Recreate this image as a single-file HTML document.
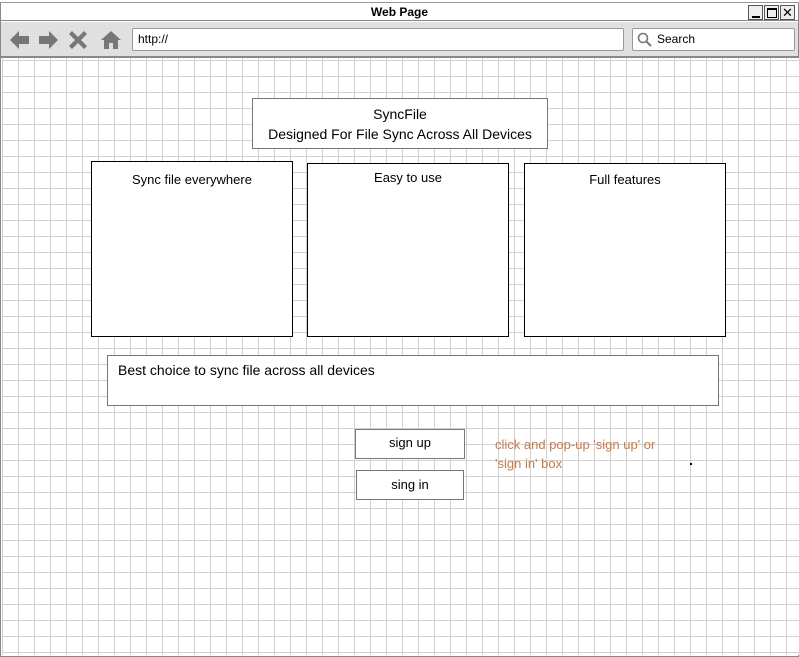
<!DOCTYPE html>
<html><head><style>
body{margin:0;width:799px;height:657px;overflow:hidden;background:#fff;font-family:"Liberation Sans",sans-serif;position:relative}
.a{position:absolute;box-sizing:border-box}
.grid{left:2px;top:58px;width:797px;height:597px;background-color:#fff;
background-image:linear-gradient(to right,#d0d0d0 1px,transparent 1px),linear-gradient(to bottom,#d0d0d0 1px,transparent 1px);
background-size:16px 16px;background-position:0px 2px}
.box{background:#fff;border:1px solid #000;text-align:center;font-size:13px;color:#000}
.btn{background:#fff;border:1px solid #777;text-align:center;font-size:13px}
</style></head><body>
<div class="a" style="left:0;top:2px;width:799px;height:655px;border:1px solid #888;border-top:2px solid #999"></div>
<div class="a" style="left:1px;top:3px;width:797px;height:18px;background:#fff;border-bottom:1px solid #888;text-align:center;font-size:12px;font-weight:bold;line-height:18px">Web Page</div>
<div class="a" style="left:748px;top:5px;width:15px;height:15px;border:1px solid #555;background:#eee"><div class="a" style="left:3px;top:10px;width:8px;height:2px;background:#000"></div></div>
<div class="a" style="left:764px;top:5px;width:15px;height:15px;border:1px solid #555;background:#eee"><div class="a" style="left:2px;top:2px;width:10px;height:10px;border:1px solid #000;border-top-width:2px"></div></div>
<div class="a" style="left:780px;top:5px;width:15px;height:15px;border:1px solid #555;background:#eee;font-size:13px;line-height:13px;text-align:center">✕</div>
<div class="a" style="left:1px;top:22px;width:797px;height:36px;background:#e0e0e0;border-bottom:2px solid #888"></div>
<svg class="a" style="left:8px;top:28px" width="120" height="24" viewBox="0 0 120 24" fill="#777">
<path d="M2 12 L11 3 L11 8 L21 8 L21 16 L11 16 L11 21 Z"/>
<path d="M50 12 L41 3 L41 8 L31 8 L31 16 L41 16 L41 21 Z"/>
<path d="M61 4 L64 1 L70 7 L76 1 L79 4 L73 10 L79 16 L76 19 L70 13 L64 19 L61 16 L67 10 Z" transform="translate(0,2)"/>
<path d="M93 12 L103 3 L113 12 L110 12 L110 21 L105 21 L105 15 L101 15 L101 21 L96 21 L96 12 Z"/>
</svg>
<div class="a" style="left:132px;top:28px;width:492px;height:23px;background:#fff;border:1px solid #999;border-radius:2px;font-size:12px;line-height:21px;padding-left:5px">http://</div>
<div class="a" style="left:632px;top:28px;width:163px;height:23px;background:#fff;border:1px solid #999;border-radius:2px;font-size:12px;line-height:21px;padding-left:24px">Search</div>
<svg class="a" style="left:637px;top:32px" width="16" height="16"><circle cx="6" cy="6" r="4.5" fill="none" stroke="#777" stroke-width="1.6"/><path d="M9 9 L14 14" stroke="#777" stroke-width="2"/></svg>
<div class="a grid"></div>
<div class="a box" style="left:252px;top:98px;width:296px;height:51px;border-color:#777;font-size:14px;line-height:20px;padding-top:5px">SyncFile<br>Designed For File Sync Across All Devices</div>
<div class="a box" style="left:91px;top:161px;width:202px;height:176px;padding-top:10px">Sync file everywhere</div>
<div class="a box" style="left:307px;top:163px;width:202px;height:174px;padding-top:6px">Easy to use</div>
<div class="a box" style="left:524px;top:163px;width:202px;height:174px;padding-top:8px">Full features</div>
<div class="a box" style="left:107px;top:355px;width:612px;height:51px;border-color:#777;text-align:left;font-size:14px;padding:6px 0 0 10px">Best choice to sync file across all devices</div>
<div class="a btn" style="left:355px;top:429px;width:110px;height:30px;line-height:26px">sign up</div>
<div class="a btn" style="left:356px;top:470px;width:108px;height:30px;line-height:28px">sing in</div>
<div class="a" style="left:495px;top:435px;font-size:13px;line-height:19px;color:#c87a4a">click and pop-up 'sign up' or<br>'sign in' box</div>
<div class="a" style="left:690px;top:463px;width:2px;height:2px;background:#000"></div>
</body></html>
